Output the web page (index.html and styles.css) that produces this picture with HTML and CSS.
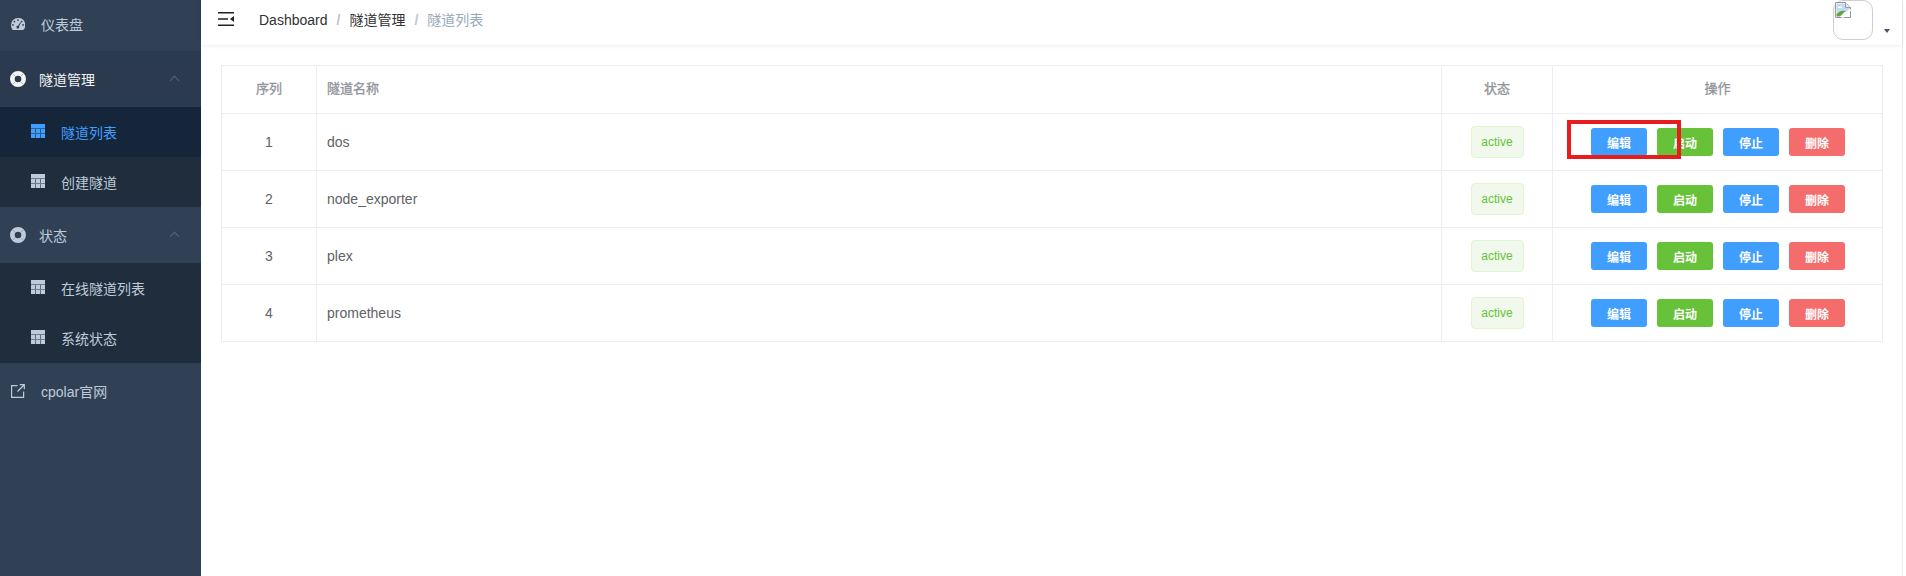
FILE: index.html
```html
<!DOCTYPE html>
<html>
<head>
    <meta charset="utf-8">
    <link rel="stylesheet" href="styles.css">
    <title>隧道列表</title>
</head>
<body>

    <svg class="defs" width="0" height="0">
      <symbol id="icon-table" viewBox="0 0 14 14">
        <path d="M0 0h14v14H0z M0 4.500v.6h14v-.6z M0 9v.6h14V9z M4.400 5.100V14h.6V5.100z M9 5.100V14h.6V5.100z" fill-rule="evenodd"/>
      </symbol>
      <symbol id="icon-ring" viewBox="0 0 16 16">
        <path d="M8 0a8 8 0 1 0 0 16A8 8 0 0 0 8 0z M8 4.700a3.300 3.300 0 1 1 0 6.600a3.300 3.300 0 0 1 0-6.600z" fill-rule="evenodd"/>
        <path d="M2.500 2.500l3 3 M13.500 2.500l-3 3 M2.500 13.500l3-3 M13.500 13.500l-3-3" stroke="#8a97a8" stroke-width=".7"/>
      </symbol>
    </svg>

    <div class="app">
      <aside class="sidebar">
        <a class="menu-item first">
          <svg class="menu-icon gauge" viewBox="0 0 14 12"><path d="M7 0a7 7 0 0 0-7 7c0 2 .7 3.700 1.800 5h10.400A7 7 0 0 0 7 0z M7 1.200a.9.9 0 1 1 0 1.800a.9.9 0 0 1 0-1.800z M3.400 2.700a.9.900 0 1 1 0 1.800a.9.900 0 0 1 0-1.800z M10.600 2.700a.9.900 0 1 1 0 1.800a.9.900 0 0 1 0-1.800z M1.900 6a.9.900 0 1 1 0 1.800a.9.900 0 0 1 0-1.800z M12.100 6a.9.900 0 1 1 0 1.800a.9.900 0 0 1 0-1.800z M9.200 4.300l.8.400L8 8.300a1.400 1.400 0 1 1-.9-.6z" fill-rule="evenodd"/></svg>
          <span>仪表盘</span>
        </a>

        <div class="submenu-title is-open">
          <svg class="ring"><use href="#icon-ring"/></svg>
          <span>隧道管理</span>
          <i class="arrow"></i>
        </div>
        <a class="submenu-item is-active"><svg class="table-icon"><use href="#icon-table"/></svg><span>隧道列表</span></a>
        <a class="submenu-item"><svg class="table-icon"><use href="#icon-table"/></svg><span>创建隧道</span></a>

        <div class="submenu-title">
          <svg class="ring"><use href="#icon-ring"/></svg>
          <span>状态</span>
          <i class="arrow"></i>
        </div>
        <a class="submenu-item"><svg class="table-icon"><use href="#icon-table"/></svg><span>在线隧道列表</span></a>
        <a class="submenu-item"><svg class="table-icon"><use href="#icon-table"/></svg><span>系统状态</span></a>

        <a class="menu-item external">
          <svg class="menu-icon outline" viewBox="0 0 14 14"><path d="M6.500 1.600H.6v11.800h12V7.500 M6.500 7.500L13 1 M8.800 .7h4.500v4.500"/></svg>
          <span>cpolar官网</span>
        </a>
      </aside>

      <div class="main">
        <header class="navbar">
          <svg class="hamburger" viewBox="0 0 16 14"><path d="M0 0h16v1.500H0z M0 6.200h10v1.500H0z M0 12.500h16V14H0z M16 4v6l-4-3z"/></svg>
          <nav class="breadcrumb">
            <span>Dashboard</span><i>/</i><span>隧道管理</span><i>/</i><span class="current">隧道列表</span>
          </nav>
          <div class="avatar">
            <div class="avatar-img">
              <svg class="broken" viewBox="0 0 16 16">
                <path d="M.5.500h10l5 5v10H.5z" fill="#fff" stroke="#9a9a9a"/>
                <path d="M1.500 1.500h8.500v4.500h4.500v3L1.500 12z" fill="#c4d8f4"/>
                <path d="M3 4.500h4v1.500H3z" fill="#fff"/>
                <path d="M1.500 14.500V12c3-3 6-4 9-3L5 14.500z" fill="#5aa93a"/>
                <path d="M10.500.5v5h5" fill="#e8e8e8" stroke="#9a9a9a"/>
                <path d="M7 15.500l8.500-8" stroke="#fff" stroke-width="2"/>
              </svg>
            </div>
            <i class="caret"></i>
          </div>
        </header>

        <section class="content">
          <table class="tunnels">
            <colgroup>
              <col class="col-index"><col><col class="col-status"><col class="col-actions">
            </colgroup>
            <thead>
              <tr><th>序列</th><th class="left">隧道名称</th><th>状态</th><th>操作</th></tr>
            </thead>
            <tbody>
              <tr>
                <td>1</td><td class="left">dos</td><td><span class="tag">active</span></td>
                <td class="actions">
                  <div class="btns">
                    <button class="btn primary">编辑</button><button class="btn success">启动</button><button class="btn primary">停止</button><button class="btn danger">删除</button>
                    <span class="annotation"></span>
                  </div>
                </td>
              </tr>
              <tr>
                <td>2</td><td class="left">node_exporter</td><td><span class="tag">active</span></td>
                <td class="actions"><div class="btns"><button class="btn primary">编辑</button><button class="btn success">启动</button><button class="btn primary">停止</button><button class="btn danger">删除</button></div></td>
              </tr>
              <tr>
                <td>3</td><td class="left">plex</td><td><span class="tag">active</span></td>
                <td class="actions"><div class="btns"><button class="btn primary">编辑</button><button class="btn success">启动</button><button class="btn primary">停止</button><button class="btn danger">删除</button></div></td>
              </tr>
              <tr>
                <td>4</td><td class="left">prometheus</td><td><span class="tag">active</span></td>
                <td class="actions"><div class="btns"><button class="btn primary">编辑</button><button class="btn success">启动</button><button class="btn primary">停止</button><button class="btn danger">删除</button></div></td>
              </tr>
            </tbody>
          </table>
        </section>
      </div>
    </div>

</body>
</html>
```

FILE: styles.css
```css
/* general styling */
* {
  box-sizing: border-box;
  margin: 0;
  padding: 0;
}

html, body {
  height: 100%;
  overflow: hidden;
}

body {
  background-color: #fff;
  font-family: "Liberation Sans", "Noto Sans CJK SC", sans-serif;
  font-size: 14px;
}

.defs {
  position: absolute;
}

.app {
  display: flex;
  height: 100%;
}

/* sidebar */
.sidebar {
  background-color: #304156;
  color: #bfcbd9;
  flex: 0 0 201px;
}

.menu-item {
  align-items: center;
  display: flex;
  height: 51px;
  padding-left: 11px;
}

.menu-item.first {
  padding-bottom: 4px;
}

.menu-item.external {
  height: 56px;
}

.menu-icon {
  fill: currentColor;
  flex: none;
  height: 14px;
  margin-right: 16px;
  width: 14px;
}

.menu-icon.outline {
  fill: none;
  stroke: currentColor;
  stroke-width: 1.2;
}

.submenu-title {
  align-items: center;
  display: flex;
  height: 56px;
  padding: 0 23px 0 10px;
}

.submenu-title.is-open {
  background-color: #2b3a4e;
  color: #f4f4f5;
}

.ring {
  fill: currentColor;
  flex: none;
  height: 16px;
  margin-right: 13px;
  width: 16px;
}

.arrow {
  border-left: 1px solid #566577;
  border-top: 1px solid #566577;
  height: 7px;
  margin-left: auto;
  margin-top: 3px;
  transform: rotate(45deg);
  width: 7px;
}

.submenu-item {
  align-items: center;
  background-color: #1f2d3d;
  display: flex;
  height: 50px;
  padding-left: 31px;
}

.submenu-item.is-active {
  background-color: #16263a;
  color: #409eff;
}

.table-icon {
  fill: currentColor;
  flex: none;
  height: 14px;
  margin-right: 16px;
  margin-top: -2px;
  width: 14px;
}

/* top bar */
.main {
  border-right: 1px solid #eee;
  display: flex;
  flex: 1;
  flex-direction: column;
  margin-right: 3px;
  min-width: 0;
}

.navbar {
  align-items: center;
  box-shadow: 0 1px 4px rgba(0, 21, 41, .08);
  display: flex;
  height: 45px;
  padding-left: 17px;
  position: relative;
}

.hamburger {
  fill: #222;
  height: 14px;
  margin-top: -7px;
  width: 16px;
}

.breadcrumb {
  color: #303133;
  margin-left: 25px;
  margin-top: -7px;
}

.breadcrumb i {
  color: #c0c4cc;
  font-style: normal;
  font-weight: bold;
  margin: 0 9px;
}

.breadcrumb .current {
  color: #97a8be;
}

.avatar {
  align-items: flex-start;
  align-self: flex-start;
  display: flex;
  margin-left: auto;
  margin-right: 12px;
}

.avatar-img {
  border: 1px solid #cfcfcf;
  border-radius: 10px;
  height: 40px;
  width: 40px;
}

.broken {
  display: block;
  height: 16px;
  margin: 1px 0 0 1px;
  width: 16px;
}

.caret {
  border-left: 3.5px solid transparent;
  border-right: 3.5px solid transparent;
  border-top: 4px solid #4a5566;
  margin: 29px 0 0 11px;
}

/* table */
.content {
  padding: 20px 19px 0 20px;
}

.tunnels {
  border-collapse: collapse;
  color: #606266;
  table-layout: fixed;
  width: 100%;
}

.col-index {
  width: 95px;
}

.col-status {
  width: 111px;
}

.col-actions {
  width: 330px;
}

.tunnels th,
.tunnels td {
  border: 1px solid #ebeef5;
  padding: 0 8px;
  text-align: center;
}

.tunnels th {
  color: #909399;
  font-size: 13px;
  font-weight: normal;
  height: 48px;
  padding-bottom: 4px;
  -webkit-text-stroke: .3px #909399;
}

.tunnels td {
  height: 57px;
}

.tunnels .left {
  padding-left: 10px;
  text-align: left;
}

.tag {
  background-color: #f0f9eb;
  border: 1px solid #e1f3d8;
  border-radius: 4px;
  color: #67c23a;
  display: inline-block;
  font-size: 12px;
  height: 32px;
  line-height: 30px;
  vertical-align: middle;
  width: 53px;
}

.btns {
  display: flex;
  gap: 10px;
  margin-left: 30px;
  position: relative;
}

.btn {
  border: 0;
  border-radius: 3px;
  color: #fff;
  font-family: inherit;
  font-size: 12px;
  font-weight: bold;
  height: 28px;
  width: 56px;
}

.primary {
  background-color: #409eff;
}

.success {
  background-color: #67c23a;
}

.danger {
  background-color: #f56c6c;
}

/* red marker drawn over the first row */
.annotation {
  border: 4px solid #e81c1c;
  height: 39px;
  left: -24px;
  position: absolute;
  top: -8px;
  width: 114px;
}
```
